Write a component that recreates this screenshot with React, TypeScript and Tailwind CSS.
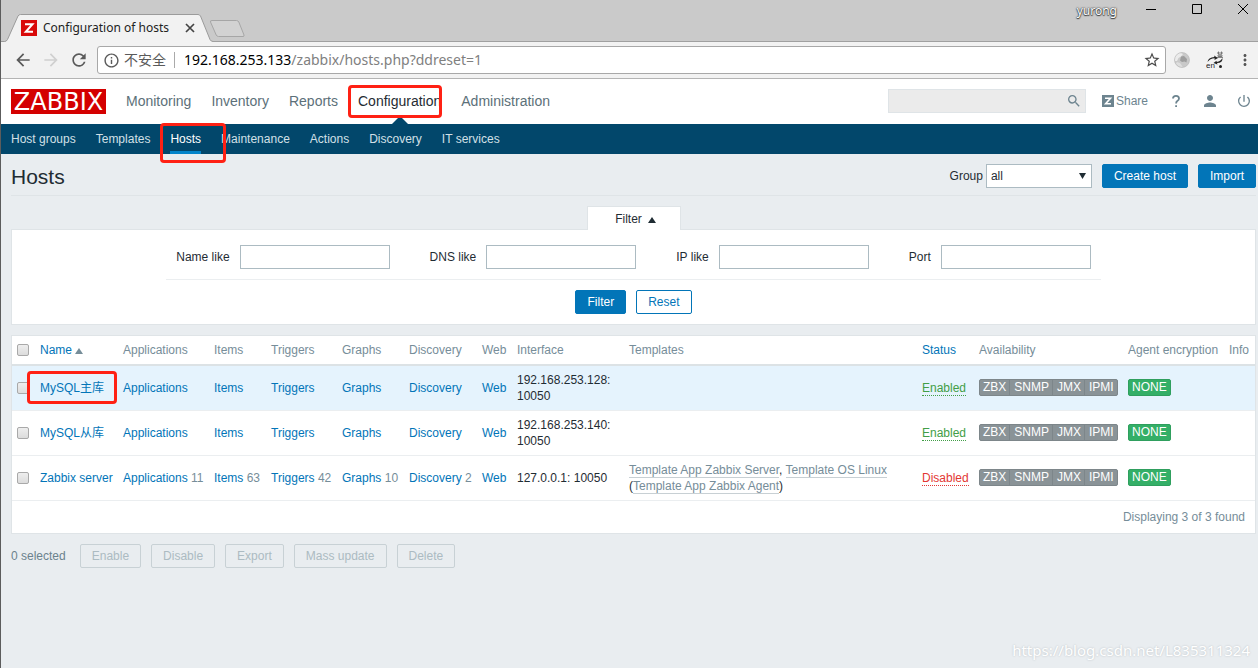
import React from "react";
import {
  MdArrowBack,
  MdArrowForward,
  MdInfoOutline,
  MdMoreVert,
  MdPerson,
  MdPowerSettingsNew,
  MdRefresh,
  MdSearch,
  MdStarBorder,
} from "react-icons/md";

const chromeFont = "font-['Noto_Sans','Noto_Sans_CJK_SC',sans-serif]";

function RedMark({ className }: { className: string }) {
  return (
    <span
      aria-hidden="true"
      className={`pointer-events-none absolute z-10 rounded-[4px] border-3 border-[#ff2114] ${className}`}
    />
  );
}

function TabStrip() {
  return (
    <div className={`flex h-[42px] items-end border-b border-[#a0a0a0] bg-[#cacaca] ${chromeFont}`}>
      <div className="relative -mb-px flex h-7 w-[212px] items-center pl-5">
        <svg className="absolute inset-0 h-7 w-[212px]" viewBox="0 0 212 28" aria-hidden="true">
          <path d="M0 28V27.5H3.5Q5.500 27.500 6.500 25.500L17 2Q18 .5 19.500 .5H197Q198.500 .5 199.500 2L209 25.500Q210 27.500 212 27.500V28Z" fill="#f2f2f2" />
          <path d="M0 27.500H3.500Q5.500 27.500 6.500 25.500L17 2Q18 .5 19.500 .5H197Q198.500 .5 199.500 2L209 25.500Q210 27.500 212 27.500" fill="none" stroke="#9b9b9b" />
        </svg>
        <svg className="relative size-4" viewBox="0 0 16 16" aria-hidden="true">
          <path d="M0 0H16V16H0Z" fill="#d90a0a" />
          <path d="M4 4.200H11.500L4.800 11.800H12" fill="none" stroke="#fff" strokeWidth="2" />
        </svg>
        <span className="relative ml-1.5 text-xs whitespace-nowrap text-[#222]">Configuration of hosts</span>
        <button type="button" aria-label="Close tab" className="absolute top-2 right-[17px] size-3">
          <svg viewBox="0 0 12 12" className="size-3">
            <path d="M2 2L10 10M10 2L2 10" stroke="#444" strokeWidth="1.700" />
          </svg>
        </button>
      </div>
      <button type="button" aria-label="New tab" className="mb-[3px] -ml-1 h-[18px] w-9">
        <svg viewBox="0 0 36 18" className="h-[18px] w-9">
          <path d="M3 .5H27.500Q29 .5 29.800 2L35 15Q35.500 16.500 34 16.500H9.500Q8 16.500 7.200 15L1.500 2Q1 .5 3 .5Z" fill="#d2d2d2" stroke="#a6a6a6" />
        </svg>
      </button>
      <div className="ml-auto flex h-full items-start gap-7">
        <span className="mt-[3px] text-xs text-white [text-shadow:0_0_2px_#333,0_0_1px_#333,0_1px_1px_#444]">yurong</span>
        <div className="flex gap-[34px] pt-[3px] pr-[9px]">
          <button type="button" aria-label="Minimize" className="size-3">
            <svg viewBox="0 0 12 12" className="size-3"><path d="M1 6.500H11" stroke="#000" /></svg>
          </button>
          <button type="button" aria-label="Maximize" className="size-3">
            <svg viewBox="0 0 12 12" className="size-3"><path d="M1.500 1.500H10.500V10.500H1.500Z" fill="none" stroke="#000" /></svg>
          </button>
          <button type="button" aria-label="Close" className="size-3">
            <svg viewBox="0 0 12 12" className="size-3"><path d="M1 1L11 11M11 1L1 11" stroke="#000" /></svg>
          </button>
        </div>
      </div>
    </div>
  );
}

function Toolbar() {
  return (
    <div className={`flex h-[37px] items-center border-b border-[#b4b4b4] bg-[#f2f2f2] ${chromeFont}`}>
      <div className="flex w-24 items-center gap-2 pl-3 text-xl text-[#5a5a5a]">
        <button type="button" aria-label="Back"><MdArrowBack /></button>
        <button type="button" aria-label="Forward" className="text-[#d0d0d0]"><MdArrowForward /></button>
        <button type="button" aria-label="Reload"><MdRefresh /></button>
      </div>
      <div className="flex h-7 flex-1 items-center rounded-[3px] border border-[#a8a8a8] bg-white pr-1 pl-[5px]">
        <MdInfoOutline className="size-[17px] text-[#5a5a5a]" />
        <span className="ml-1 text-sm text-[#5a5a5a]">不安全</span>
        <span className="mr-[9px] ml-2 h-4 w-px bg-[#aaa]" />
        <span className="flex-1 text-sm text-[#808080]">
          <span className="text-black">192.168.253.133</span>/zabbix/hosts.php?ddreset=1
        </span>
        <button type="button" aria-label="Bookmark"><MdStarBorder className="size-[18px] text-[#4a4a4a]" /></button>
      </div>
      <div className="flex items-center pl-2">
        <svg className="size-4" viewBox="0 0 16 16" aria-hidden="true">
          <circle cx="8" cy="8" r="7.500" fill="#c9c9c9" />
          <path d="M1 5Q3 1.200 6.500 .8L9 2L7 4.500L4.500 6L3 9L1 9Z" fill="#ebebeb" />
          <path d="M7 4.500L10 4L13 7L12.500 10.500L10.500 9.500L8 10L6 8.500Z" fill="#9e9e9e" />
          <path d="M3 10L6 11L9 15.200Q4 15 2 11.500Z" fill="#dedede" />
          <circle cx="8" cy="8" r="7.500" fill="none" stroke="#b5b5b5" strokeWidth=".6" />
        </svg>
        <svg className="ml-4 size-[18px]" viewBox="0 0 18 18" aria-hidden="true">
          <path d="M1.500 11Q2 6.500 8.500 6L8 4.500L12 7L8.500 9L8.700 7.300Q4 7.500 1.500 11Z" fill="#222" />
          <path d="M16.500 7Q17 12 11 12L11.500 13.500L7.500 12L10.500 9.800L10.700 11Q14.500 10.500 16.500 7Z" fill="#222" />
          <path d="M11 2H17M12.500 .5V3.500M15.500 .5V3.500M12 4H16V5.500H12ZM11 6.500H17M14 3V6" fill="none" stroke="#666" strokeWidth=".8" />
          <text x="0" y="17" fontSize="8" fill="#222" fontFamily="Liberation Sans">en</text>
          <circle cx="14.500" cy="15.500" r="1.500" fill="#222" />
        </svg>
        <button type="button" aria-label="Menu" className="mr-1 ml-3"><MdMoreVert className="size-[18px] text-[#555]" /></button>
      </div>
    </div>
  );
}

const mainMenu = ["Monitoring", "Inventory", "Reports", "Configuration", "Administration"];
const subMenu = ["Host groups", "Templates", "Hosts", "Maintenance", "Actions", "Discovery", "IT services"];

function Header() {
  return (
    <header>
      <div className="flex h-[45px] items-start bg-white pt-[10px] pr-2 pl-[10px]">
        <a href="#" className="flex h-[25px] w-[95px] items-center justify-center bg-[#d40000] font-['DejaVu_Sans',sans-serif] text-2xl leading-none text-white">
          ZABBIX
        </a>
        <nav className="ml-5 flex gap-5 text-sm leading-6 text-[#5c7079]">
          {mainMenu.map((item) =>
            item === "Configuration" ? (
              <a key={item} href="#" className="relative text-[#1f2c33]">
                {item}
                <RedMark className="-top-1 -right-px h-[33px] w-[94px]" />
                <svg className="absolute top-[27px] left-[34px] h-2 w-4" viewBox="0 0 16 8" aria-hidden="true">
                  <path d="M0 8L8 0L16 8Z" fill="#02476b" />
                </svg>
              </a>
            ) : (
              <a key={item} href="#">{item}</a>
            ),
          )}
        </nav>
        <div className="ml-auto flex h-6 items-center text-[#6d848f]">
          <div className="flex h-6 w-[198px] items-center border border-[#dfe4e7] bg-[#ebebeb] pr-[3px]">
            <input aria-label="Search" className="min-w-0 flex-1 bg-transparent px-1 text-xs outline-none" />
            <button type="button" aria-label="Submit search"><MdSearch className="size-4" /></button>
          </div>
          <a href="#" className="ml-4 flex items-center gap-0.5 text-xs">
            <svg className="size-3" viewBox="0 0 12 12" aria-hidden="true">
              <path d="M0 0H12V12H0Z" fill="#6d848f" />
              <path d="M3 3.200H8.500L3.600 8.800H9" fill="none" stroke="#fff" strokeWidth="1.600" />
            </svg>
            Share
          </a>
          <a href="#" aria-label="Help" className="ml-6">
            <svg className="h-3.5 w-2" viewBox="0 0 8 14" aria-hidden="true">
              <path d="M1 4.500Q1 1.800 4 1.800T7 4.500Q7 6 5.300 7Q4.100 7.800 4.100 9.500M4.100 11.200V13" fill="none" stroke="#6d848f" strokeWidth="1.800" />
            </svg>
          </a>
          <a href="#" aria-label="Profile" className="ml-[21px]"><MdPerson className="size-[18px]" /></a>
          <a href="#" aria-label="Sign out" className="ml-[17px]"><MdPowerSettingsNew className="-mr-0.5 size-4" /></a>
        </div>
      </div>
      <nav className="flex h-[30px] gap-5 bg-[#02476b] pl-[10px] text-xs leading-[30px] text-[#d3e0e7]">
        {subMenu.map((item) =>
          item === "Hosts" ? (
            <a key={item} href="#" className="relative border-b-3 border-[#0484c9] text-white">
              {item}
              <RedMark className="-top-px -left-[10px] h-10 w-[66px]" />
            </a>
          ) : (
            <a key={item} href="#">{item}</a>
          ),
        )}
      </nav>
    </header>
  );
}

function Button({ children, variant = "solid" }: { children: React.ReactNode; variant?: "solid" | "outline" | "disabled" }) {
  const look = {
    solid: "border-[#0275b8] bg-[#0275b8] text-white",
    outline: "border-[#0275b8] bg-white text-[#0275b8]",
    disabled: "border-[#c8d1d5] text-[#acbbc2]",
  }[variant];
  return (
    <button type="button" disabled={variant === "disabled"} className={`h-6 rounded-[2px] border px-[11px] text-xs ${look}`}>
      {children}
    </button>
  );
}

function TitleRow() {
  return (
    <div className="flex h-[42px] items-center justify-between border-b border-[#dfe4e7] pt-1">
      <h1 className="text-[21px]">Hosts</h1>
      <form className="flex items-center gap-[10px] pb-px">
        <div className="flex items-center gap-[3px]">
          <label htmlFor="group">Group</label>
          <div className="relative">
            <select id="group" className="block h-6 w-[106px] appearance-none border border-[#acbbc2] bg-white px-1 text-xs">
              <option>all</option>
            </select>
            <svg className="pointer-events-none absolute top-[9px] right-1.5 h-1.5 w-[7px]" viewBox="0 0 7 6" aria-hidden="true">
              <path d="M0 0H7L3.500 6Z" fill="#1f2c33" />
            </svg>
          </div>
        </div>
        <Button>Create host</Button>
        <Button>Import</Button>
      </form>
    </div>
  );
}

function FilterPanel() {
  return (
    <section className="mt-[10px] flex flex-col items-center">
      <button type="button" className="z-[1] -mb-px flex h-6 w-[94px] items-center justify-center gap-1.5 border border-b-0 border-[#dfe4e7] bg-white pl-1">
        Filter
        <svg className="mt-0.5 h-1.5 w-2" viewBox="0 0 8 6" aria-hidden="true"><path d="M0 6L4 0L8 6Z" fill="#1f2c33" /></svg>
      </button>
      <form className="flex w-full flex-col items-center border border-[#dfe4e7] bg-white pt-[15px] pb-[10px]">
        <div className="flex gap-10 border-b border-[#ebeef0] px-[10px] pb-[10px]">
          {["Name like", "DNS like", "IP like", "Port"].map((label) => (
            <label key={label} className="flex items-center gap-[10px] whitespace-nowrap">
              {label}
              <input type="text" className="h-6 w-[150px] border border-[#acbbc2] bg-white px-1 outline-none" />
            </label>
          ))}
        </div>
        <div className="mt-[10px] flex gap-[10px]">
          <Button>Filter</Button>
          <Button variant="outline">Reset</Button>
        </div>
      </form>
    </section>
  );
}

type Host = {
  name: string;
  counts: (number | null)[];
  address: string[];
  templates: boolean;
  enabled: boolean;
};

const hosts: Host[] = [
  { name: "MySQL主库", counts: [null, null, null, null, null], address: ["192.168.253.128:", "10050"], templates: false, enabled: true },
  { name: "MySQL从库", counts: [null, null, null, null, null], address: ["192.168.253.140:", "10050"], templates: false, enabled: true },
  { name: "Zabbix server", counts: [11, 63, 42, 10, 2], address: ["127.0.0.1: 10050"], templates: true, enabled: false },
];

const linkColumns = ["Applications", "Items", "Triggers", "Graphs", "Discovery"];

function Tick({ label }: { label: string }) {
  return (
    <input
      type="checkbox"
      aria-label={label}
      className="block size-3 appearance-none rounded-[2px] border border-[#a9a9a9] bg-linear-to-b from-[#eeeeee] to-[#dcdcdc]"
    />
  );
}

function TemplateLink({ children }: { children: React.ReactNode }) {
  return <a href="#" className="border-b border-[#c8d0d4] text-[#768d99]">{children}</a>;
}

function HostTable() {
  return (
    <div className="mt-[10px] border border-[#dfe4e7] bg-white">
      <table className="w-full table-fixed text-left [&_td]:px-[5px] [&_th]:px-[5px] [&_th]:font-normal [&_th]:whitespace-nowrap">
        <colgroup>
          <col className="w-[23px]" />
          <col className="w-[83px]" />
          <col className="w-[91px]" />
          <col className="w-[57px]" />
          <col className="w-[71px]" />
          <col className="w-[67px]" />
          <col className="w-[73px]" />
          <col className="w-[35px]" />
          <col className="w-[112px]" />
          <col />
          <col className="w-[57px]" />
          <col className="w-[149px]" />
          <col className="w-[101px]" />
          <col className="w-[31px]" />
        </colgroup>
        <thead>
          <tr className="h-[29px] border-b-2 border-[#dce2e5] text-[#768d99]">
            <th><Tick label="Select all hosts" /></th>
            <th>
              <a href="#" className="flex items-center gap-[3px] text-[#0275b8]">
                Name
                <svg className="mt-0.5 h-1.5 w-2" viewBox="0 0 8 6" aria-hidden="true"><path d="M0 6L4 0L8 6Z" fill="#768d99" /></svg>
              </a>
            </th>
            {linkColumns.map((c) => <th key={c}>{c}</th>)}
            <th>Web</th>
            <th>Interface</th>
            <th>Templates</th>
            <th><a href="#" className="text-[#0275b8]">Status</a></th>
            <th>Availability</th>
            <th>Agent encryption</th>
            <th>Info</th>
          </tr>
        </thead>
        <tbody>
          {hosts.map((host, i) => (
            <tr key={host.name} className={`h-[45px] border-b border-[#ebeef0] ${i === 0 ? "bg-[#e5f3fd]" : ""}`}>
              <td><Tick label={`Select ${host.name}`} /></td>
              <td className="whitespace-nowrap">
                <span className="relative block">
                  <a href="#" className="text-[#0275b8]">{host.name}</a>
                  {i === 0 && <RedMark className="-top-[9px] -left-[13px] h-[33px] w-[90px]" />}
                </span>
              </td>
              {linkColumns.map((c, k) => (
                <td key={c} className="whitespace-nowrap text-[#768d99]">
                  <a href="#" className="text-[#0275b8]">{c}</a> {host.counts[k]}
                </td>
              ))}
              <td><a href="#" className="text-[#0275b8]">Web</a></td>
              <td>
                {host.address.map((line) => <div key={line} className="whitespace-nowrap">{line}</div>)}
              </td>
              <td>
                {host.templates && (
                  <>
                    <TemplateLink>Template App Zabbix Server</TemplateLink>, <TemplateLink>Template OS Linux</TemplateLink>
                    <br />(<TemplateLink>Template App Zabbix Agent</TemplateLink>)
                  </>
                )}
              </td>
              <td>
                <a href="#" className={`border-b border-dotted ${host.enabled ? "border-[#429e47] text-[#429e47]" : "border-[#e33734] text-[#e33734]"}`}>
                  {host.enabled ? "Enabled" : "Disabled"}
                </a>
              </td>
              <td>
                <div className="flex w-fit rounded-[2px] border border-[#7d868a] bg-[#8a9397] leading-[15px] text-white">
                  {["ZBX", "SNMP", "JMX", "IPMI"].map((s) => (
                    <span key={s} className="border-r border-[#7d868a] pr-[3px] pl-1 first:pl-[3px] last:border-r-0">{s}</span>
                  ))}
                </div>
              </td>
              <td>
                <span className="block w-fit rounded-[2px] border border-[#2f9f5e] bg-[#34af67] px-[3px] leading-[15px] text-white">NONE</span>
              </td>
              <td />
            </tr>
          ))}
        </tbody>
      </table>
      <div className="py-2 pr-[10px] text-right text-[#768d99]">Displaying 3 of 3 found</div>
    </div>
  );
}

export default function App() {
  return (
    <div className="relative flex min-h-screen flex-col border-l border-[#5c5c5c] bg-[#e9edf0] font-['Liberation_Sans','Noto_Sans_CJK_SC',sans-serif] text-xs text-[#1f2c33]">
      <TabStrip />
      <Toolbar />
      <Header />
      <main className="pr-0.5 pl-[10px]">
        <TitleRow />
        <FilterPanel />
        <HostTable />
        <div className="mt-[10px] flex items-center gap-[10px]">
          <span className="mr-1 text-[#6b828d]">0 selected</span>
          {["Enable", "Disable", "Export", "Mass update", "Delete"].map((a) => (
            <Button key={a} variant="disabled">{a}</Button>
          ))}
        </div>
      </main>
      <div className={`absolute right-2 bottom-2 text-[15px] leading-5 text-white [text-shadow:0_0_2px_#b4babe] ${chromeFont}`}>
        https://blog.csdn.net/L835311324
      </div>
    </div>
  );
}
